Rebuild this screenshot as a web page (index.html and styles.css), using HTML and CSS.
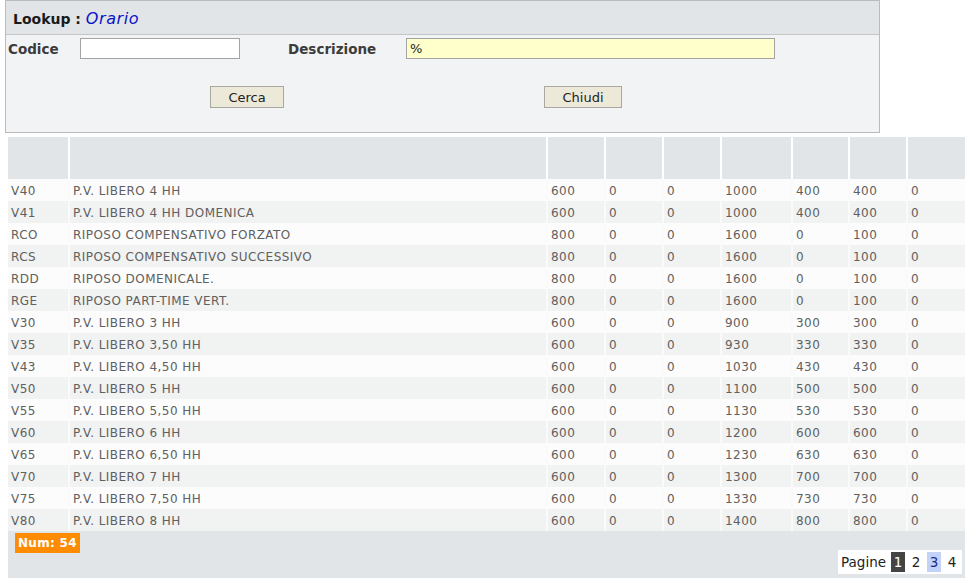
FILE: index.html
```html
<!DOCTYPE html>
<html lang="it">
<head>
<meta charset="utf-8">
<title>Lookup : Orario</title>
<link rel="stylesheet" href="styles.css">
</head>
<body>
<div class="lookup">
  <div class="lookup-title">Lookup : <span class="entity">Orario</span></div>
  <div class="lookup-form">
    <div class="field-row">
      <label class="lbl lbl-codice">Codice</label>
      <input class="inp inp-codice" type="text" value="">
      <label class="lbl lbl-descr">Descrizione</label>
      <input class="inp inp-descr" type="text" value="%">
    </div>
    <div class="btn-row">
      <button class="btn btn-cerca" type="button">Cerca</button>
      <button class="btn btn-chiudi" type="button">Chiudi</button>
    </div>
  </div>
</div>

<table class="grid">
  <thead>
    <tr>
      <th class="c1"></th><th class="c2"></th><th class="c3"></th><th class="c4"></th><th class="c5"></th><th class="c6"></th><th class="c7"></th><th class="c8"></th><th class="c9"></th>
    </tr>
  </thead>
  <tbody>
    <tr><td>V40</td><td>P.V. LIBERO 4 HH</td><td>600</td><td>0</td><td>0</td><td>1000</td><td>400</td><td>400</td><td>0</td></tr>
    <tr><td>V41</td><td>P.V. LIBERO 4 HH DOMENICA</td><td>600</td><td>0</td><td>0</td><td>1000</td><td>400</td><td>400</td><td>0</td></tr>
    <tr><td>RCO</td><td>RIPOSO COMPENSATIVO FORZATO</td><td>800</td><td>0</td><td>0</td><td>1600</td><td>0</td><td>100</td><td>0</td></tr>
    <tr><td>RCS</td><td>RIPOSO COMPENSATIVO SUCCESSIVO</td><td>800</td><td>0</td><td>0</td><td>1600</td><td>0</td><td>100</td><td>0</td></tr>
    <tr><td>RDD</td><td>RIPOSO DOMENICALE.</td><td>800</td><td>0</td><td>0</td><td>1600</td><td>0</td><td>100</td><td>0</td></tr>
    <tr><td>RGE</td><td>RIPOSO PART-TIME VERT.</td><td>800</td><td>0</td><td>0</td><td>1600</td><td>0</td><td>100</td><td>0</td></tr>
    <tr><td>V30</td><td>P.V. LIBERO 3 HH</td><td>600</td><td>0</td><td>0</td><td>900</td><td>300</td><td>300</td><td>0</td></tr>
    <tr><td>V35</td><td>P.V. LIBERO 3,50 HH</td><td>600</td><td>0</td><td>0</td><td>930</td><td>330</td><td>330</td><td>0</td></tr>
    <tr><td>V43</td><td>P.V. LIBERO 4,50 HH</td><td>600</td><td>0</td><td>0</td><td>1030</td><td>430</td><td>430</td><td>0</td></tr>
    <tr><td>V50</td><td>P.V. LIBERO 5 HH</td><td>600</td><td>0</td><td>0</td><td>1100</td><td>500</td><td>500</td><td>0</td></tr>
    <tr><td>V55</td><td>P.V. LIBERO 5,50 HH</td><td>600</td><td>0</td><td>0</td><td>1130</td><td>530</td><td>530</td><td>0</td></tr>
    <tr><td>V60</td><td>P.V. LIBERO 6 HH</td><td>600</td><td>0</td><td>0</td><td>1200</td><td>600</td><td>600</td><td>0</td></tr>
    <tr><td>V65</td><td>P.V. LIBERO 6,50 HH</td><td>600</td><td>0</td><td>0</td><td>1230</td><td>630</td><td>630</td><td>0</td></tr>
    <tr><td>V70</td><td>P.V. LIBERO 7 HH</td><td>600</td><td>0</td><td>0</td><td>1300</td><td>700</td><td>700</td><td>0</td></tr>
    <tr><td>V75</td><td>P.V. LIBERO 7,50 HH</td><td>600</td><td>0</td><td>0</td><td>1330</td><td>730</td><td>730</td><td>0</td></tr>
    <tr><td>V80</td><td>P.V. LIBERO 8 HH</td><td>600</td><td>0</td><td>0</td><td>1400</td><td>800</td><td>800</td><td>0</td></tr>
  </tbody>
</table>

<div class="grid-footer">
  <span class="num">Num: 54</span>
  <div class="pager">
    <span class="pager-label">Pagine</span>
    <span class="pg pg-current">1</span>
    <span class="pg">2</span>
    <span class="pg pg-hover">3</span>
    <span class="pg">4</span>
  </div>
</div>
</body>
</html>
```

FILE: styles.css
```css
html, body {
  margin: 0;
  padding: 0;
  background: #ffffff;
  overflow: hidden;
}

body {
  font-family: "DejaVu Sans", Verdana, sans-serif;
  color: #333333;
}

.lookup {
  box-sizing: border-box;
  width: 875px;
  margin-left: 5px;
  border: 1px solid #b9bcbf;
  background: #f2f3f5;
}

.lookup-title {
  height: 33px;
  line-height: 36px;
  padding-left: 7px;
  background: #e2e5e8;
  border-bottom: 1px solid #c3c6c9;
  font-size: 14px;
  font-weight: bold;
  color: #1a1a1a;
}

.entity {
  font-weight: normal;
  font-style: italic;
  color: #0a14c8;
  font-size: 16px;
  letter-spacing: 0.6px;
}

.lookup-form {
  height: 97px;
}

.field-row {
  display: flex;
  align-items: center;
  padding-top: 3px;
  padding-left: 2px;
}

.lbl {
  font-size: 13.5px;
  font-weight: bold;
  color: #3c3c3c;
}

.lbl-codice {
  width: 72px;
}

.lbl-descr {
  margin-left: 48px;
  width: 118px;
}

.inp {
  box-sizing: border-box;
  height: 21px;
  border: 1px solid #a3a3a3;
  margin: 0;
  padding: 0 3px;
  font-family: "DejaVu Sans", Verdana, sans-serif;
  font-size: 13px;
  color: #222222;
  outline: none;
}

.inp-codice {
  width: 160px;
  background: #ffffff;
}

.inp-descr {
  width: 369px;
  background: #ffffcc;
}

.btn-row {
  display: flex;
  padding-top: 27px;
  padding-left: 204px;
}

.btn {
  box-sizing: border-box;
  height: 22px;
  margin: 0;
  padding: 0;
  border: 1px solid #a8a8a0;
  background: #ece9d8;
  font-family: "DejaVu Sans", Verdana, sans-serif;
  font-size: 13px;
  color: #222222;
}

.btn-cerca {
  width: 74px;
}

.btn-chiudi {
  width: 78px;
  margin-left: 260px;
}

.grid {
  margin-top: 4px;
  margin-left: 8px;
  width: 957px;
  table-layout: fixed;
  border-collapse: separate;
  border-spacing: 0;
  font-size: 12px;
  letter-spacing: 0.45px;
  color: #606060;
}

.grid th {
  box-sizing: border-box;
  height: 42px;
  padding: 0;
  background: #e1e5e8;
  border-right: 2px solid #ffffff;
}

.grid th.c9 {
  border-right: none;
}

.c1 { width: 62px; }
.c2 { width: 478px; }
.c3 { width: 58px; }
.c4 { width: 58px; }
.c5 { width: 58px; }
.c6 { width: 71px; }
.c7 { width: 57px; }
.c8 { width: 58px; }
.c9 { width: 57px; }

.grid td {
  box-sizing: border-box;
  height: 22px;
  padding: 1px 0 0 3px;
  border-right: 2px solid #fafafa;
  white-space: nowrap;
  overflow: hidden;
}

.grid td:last-child {
  border-right: none;
}

.grid tbody tr:nth-child(odd) td {
  background: #fcfcfc;
}

.grid tbody tr:nth-child(even) td {
  background: #f1f2f2;
}

.grid-footer {
  box-sizing: border-box;
  width: 957px;
  height: 47px;
  margin-left: 8px;
  padding: 2px 3px 4px 7px;
  background: #e1e5e8;
  display: flex;
}

.num {
  align-self: flex-start;
  height: 20px;
  line-height: 20px;
  padding: 0 3px;
  background: #ff8c00;
  color: #ffffff;
  font-size: 12px;
  font-weight: bold;
  letter-spacing: 0.3px;
}

.pager {
  align-self: flex-end;
  margin-left: auto;
  display: flex;
  align-items: center;
  height: 24px;
  padding: 0 3px;
  background: #ffffff;
  font-size: 13.5px;
  color: #222222;
}

.pager-label {
  width: 45px;
  margin-right: 5px;
}

.pg {
  width: 14px;
  height: 20px;
  line-height: 20px;
  text-align: center;
  margin-left: 4px;
}

.pg-current {
  margin-left: 0;
  background: #444444;
  color: #ffffff;
}

.pg-hover {
  background: #c3d3f7;
  color: #1a2a90;
}
```
